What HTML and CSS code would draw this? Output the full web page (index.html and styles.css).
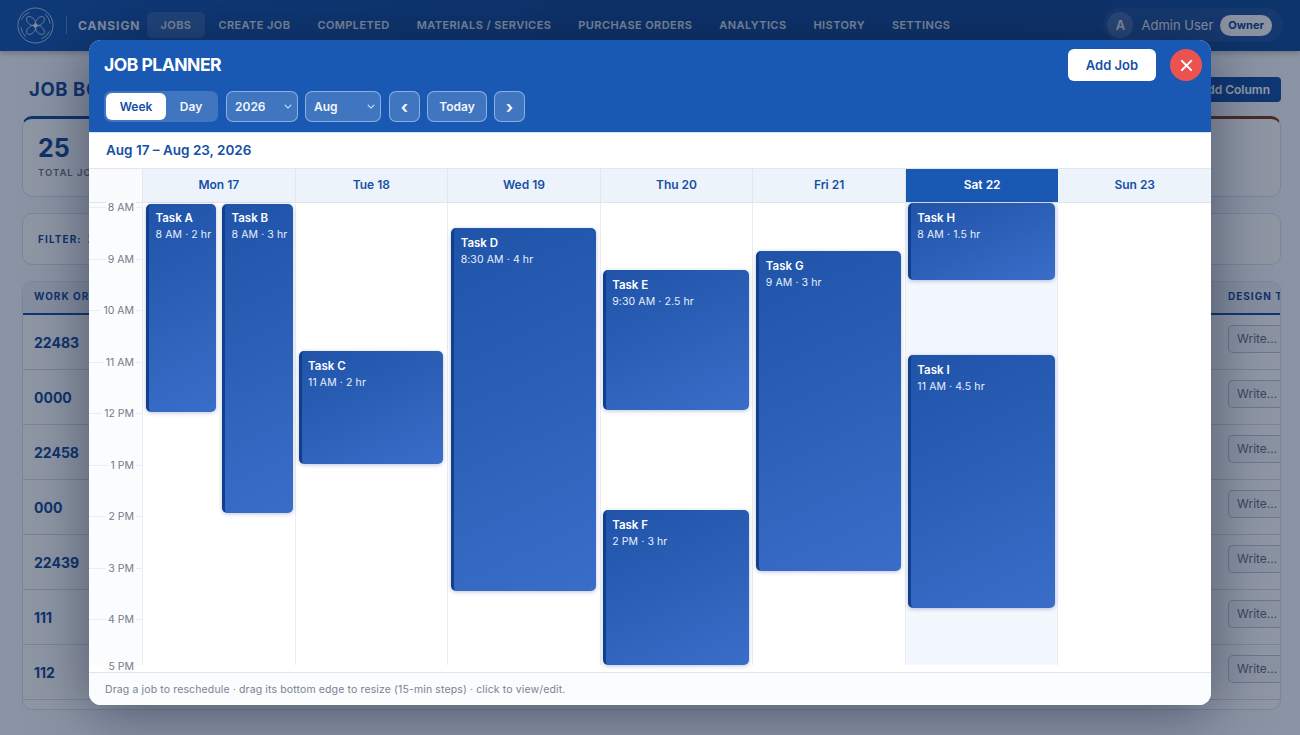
FILE: index.html
```html
<!DOCTYPE html>
<html lang="en">
<head>
<meta charset="utf-8">
<title>Job Planner</title>
<link rel="stylesheet" href="styles.css">
</head>
<body>
<div class="page">
  <nav class="nav">
    <svg class="logo" viewBox="0 0 38 38" fill="none" stroke="#d5dfef" stroke-width=".8">
      <circle cx="19" cy="19" r="18"/>
      <path d="M4.500 13a15.500 15.500 0 0 1 8-7.500M33.500 25a15.500 15.500 0 0 1-8 7.500M4 21a15.500 15.500 0 0 0 5 9.500M34 17a15.500 15.500 0 0 0-5-9.500"/>
      <ellipse cx="19" cy="12.500" rx="3.500" ry="5.500" transform="rotate(45 19 19)"/>
      <ellipse cx="19" cy="12.500" rx="3.500" ry="5.500" transform="rotate(135 19 19)"/>
      <ellipse cx="19" cy="12.500" rx="3.500" ry="5.500" transform="rotate(225 19 19)"/>
      <ellipse cx="19" cy="12.500" rx="3.500" ry="5.500" transform="rotate(315 19 19)"/>
      <circle cx="19" cy="19" r="2" fill="#d5dfef"/>
    </svg>
    <span class="nav-sep"></span>
    <span class="brand">CANSIGN</span>
    <a class="nav-link active">JOBS</a>
    <a class="nav-link">CREATE JOB</a>
    <a class="nav-link">COMPLETED</a>
    <a class="nav-link">MATERIALS / SERVICES</a>
    <a class="nav-link">PURCHASE ORDERS</a>
    <a class="nav-link">ANALYTICS</a>
    <a class="nav-link">HISTORY</a>
    <a class="nav-link">SETTINGS</a>
    <div class="user">
      <span class="avatar">A</span>
      <span class="user-name">Admin User</span>
      <span class="role">Owner</span>
    </div>
  </nav>
  <main class="content">
    <div class="title-row">
      <h1>JOB BOARD</h1>
      <button class="add-col">+ Add Column</button>
    </div>
    <div class="stats-row">
      <section class="card stats">
        <div class="stat-num">25</div>
        <div class="stat-label">TOTAL JOBS</div>
      </section>
      <section class="card stats stats-alert"></section>
    </div>
    <section class="card filter"><b>FILTER:</b><span>Z</span></section>
    <section class="card table">
      <div class="thead"><span>WORK ORDER</span><span>DESIGN TASK</span></div>
      <div class="row"><b>22483</b><span class="write">Write...</span></div>
      <div class="row"><b>0000</b><span class="write">Write...</span></div>
      <div class="row"><b>22458</b><span class="write">Write...</span></div>
      <div class="row"><b>000</b><span class="write">Write...</span></div>
      <div class="row"><b>22439</b><span class="write">Write...</span></div>
      <div class="row"><b>111</b><span class="write">Write...</span></div>
      <div class="row"><b>112</b><span class="write">Write...</span></div>
    </section>
  </main>
</div>
<div class="overlay"></div>
<div class="modal">
  <header class="m-head">
    <div class="m-top">
      <h2>JOB PLANNER</h2>
      <button class="add-job">Add Job</button>
      <button class="close" aria-label="Close">
        <svg viewBox="0 0 14 14" width="13" height="13" stroke="#fff" stroke-width="2.200" stroke-linecap="round"><path d="M2 2l10 10M12 2L2 12"/></svg>
      </button>
    </div>
    <div class="m-tools">
      <div class="seg"><button class="seg-on">Week</button><button class="seg-off">Day</button></div>
      <div class="sel sel-year">2026<svg viewBox="0 0 10 6" width="8" height="5" fill="none" stroke="#dbe7fa" stroke-width="1.300"><path d="M1 1l4 4 4-4"/></svg></div>
      <div class="sel sel-month">Aug<svg viewBox="0 0 10 6" width="8" height="5" fill="none" stroke="#dbe7fa" stroke-width="1.300"><path d="M1 1l4 4 4-4"/></svg></div>
      <button class="tool arrow">‹</button>
      <button class="tool today">Today</button>
      <button class="tool arrow">›</button>
    </div>
  </header>
  <div class="range">Aug 17 – Aug 23, 2026</div>
  <div class="days-head">
    <div class="corner"></div>
    <div class="dh">Mon 17</div>
    <div class="dh">Tue 18</div>
    <div class="dh">Wed 19</div>
    <div class="dh">Thu 20</div>
    <div class="dh">Fri 21</div>
    <div class="dh dh-on">Sat 22</div>
    <div class="dh">Sun 23</div>
  </div>
  <div class="cal">
    <div class="times">
      <div class="t"><span>8 AM</span></div><div class="t"><span>9 AM</span></div><div class="t"><span>10 AM</span></div><div class="t"><span>11 AM</span></div><div class="t"><span>12 PM</span></div><div class="t"><span>1 PM</span></div><div class="t"><span>2 PM</span></div><div class="t"><span>3 PM</span></div><div class="t t-short"><span>4 PM</span></div><div class="t t-end"><span>5 PM</span></div>
    </div>
    <div class="col">
      <article class="ev e-a"><b>Task A</b><span>8 AM · 2 hr</span></article>
      <article class="ev e-b"><b>Task B</b><span>8 AM · 3 hr</span></article>
    </div>
    <div class="col">
      <article class="ev e-c"><b>Task C</b><span>11 AM · 2 hr</span></article>
    </div>
    <div class="col">
      <article class="ev e-d"><b>Task D</b><span>8:30 AM · 4 hr</span></article>
    </div>
    <div class="col">
      <article class="ev e-e"><b>Task E</b><span>9:30 AM · 2.5 hr</span></article>
      <article class="ev e-f"><b>Task F</b><span>2 PM · 3 hr</span></article>
    </div>
    <div class="col">
      <article class="ev e-g"><b>Task G</b><span>9 AM · 3 hr</span></article>
    </div>
    <div class="col col-on">
      <article class="ev e-h"><b>Task H</b><span>8 AM · 1.5 hr</span></article>
      <article class="ev e-i"><b>Task I</b><span>11 AM · 4.5 hr</span></article>
    </div>
    <div class="col col-last"></div>
  </div>
  <footer class="m-foot">Drag a job to reschedule · drag its bottom edge to resize (15-min steps) · click to view/edit.</footer>
</div>
</body>
</html>
```
FILE: styles.css
```css
* { box-sizing: border-box; }
html, body { margin: 0; height: 100%; overflow: hidden; }
body { font-family: Inter, "Liberation Sans", sans-serif; background: #f1f4f9; color: #123a7e; }
button { font-family: inherit; border: 0; cursor: pointer; }

.page { width: 1300px; height: 735px; overflow: hidden; }
.nav { height: 51px; padding: 0 0 1px 17px; display: flex; align-items: center; background: linear-gradient(90deg, #0f52ad, #0e4392 45%, #0e4594); box-shadow: 0 2px 6px rgba(0,0,0,.25); }
.logo { width: 37px; height: 37px; flex: none; }
.nav-sep { width: 1px; height: 18px; margin: 0 11px 0 12px; background: rgba(255,255,255,.3); }
.brand { width: 68px; font-size: 12px; font-weight: 700; letter-spacing: .9px; color: #e6ebf3; }
.nav-link { height: 26px; padding: 0 13.500px; display: flex; align-items: center; font-size: 11px; font-weight: 600; letter-spacing: .42px; color: #dbe2ee; border-radius: 5px; white-space: nowrap; }
.nav-link.active { background: rgba(255,255,255,.13); margin-left: 1px; }
.user { margin-left: auto; margin-right: 17px; height: 34px; padding: 0 11px 0 4px; display: flex; align-items: center; border-radius: 17px; background: rgba(255,255,255,.06); }
.avatar { width: 26px; height: 26px; border-radius: 50%; display: grid; place-items: center; background: rgba(255,255,255,.16); color: #e6ebf3; font-size: 13px; font-weight: 600; }
.user-name { margin: 0 7px 0 8px; font-size: 13px; color: #e6ebf3; }
.role { height: 21px; padding: 0 8px; border-radius: 11px; display: flex; align-items: center; background: #f3f5f9; color: #0e3f8e; font-size: 11px; font-weight: 700; }

.content { padding: 26px 19px 0 22px; }
.title-row { height: 39px; display: flex; justify-content: space-between; align-items: flex-start; }
h1 { margin: 0 0 0 7px; font-size: 18.500px; line-height: 24px; font-weight: 700; letter-spacing: .6px; color: #0f4494; }
.add-col { height: 25px; width: 120px; text-align: right; padding: 0 11px; border-radius: 4px; background: #0f4ba3; color: #fff; font-size: 12px; font-weight: 600; }
.card { background: #f7f9fc; border: 1px solid #d5dbe6; border-radius: 10px; }
.stats-row { display: flex; gap: 16px; }
.stats { flex: 1; height: 81px; border-top: 3px solid #0f4494; padding: 16px 15px; }
.stats-alert { flex: none; width: 300px; border-top-color: #7a3512; }
.stat-num { font-size: 25px; line-height: 26px; font-weight: 700; color: #0f4494; }
.stat-label { margin-top: 6px; font-size: 9.500px; font-weight: 600; letter-spacing: 1px; color: #6a7280; }
.filter { height: 52px; margin-top: 16px; padding-left: 15px; display: flex; align-items: center; gap: 6px; font-size: 10px; letter-spacing: 1.100px; color: #0f4494; }
.table { height: 429px; margin-top: 16px; overflow: hidden; }
.thead { height: 33px; padding: 0 0 3px 11px; display: flex; justify-content: space-between; align-items: center; background: #e7ebf3; border-bottom: 2px solid #0f4ba3; font-size: 10px; font-weight: 700; letter-spacing: 1px; color: #0f4494; }
.thead span:last-child { width: 52px; white-space: nowrap; }
.row { height: 55px; padding-left: 11px; display: flex; justify-content: space-between; align-items: center; border-bottom: 1px solid #d2d8e3; }
.row b { font-size: 14px; color: #0f4494; }
.write { width: 52px; height: 28px; padding-left: 8px; margin-bottom: 7px; display: flex; align-items: center; border: 1px solid #b8c2d4; border-right: 0; border-radius: 5px 0 0 5px; background: #f0f3f8; font-size: 12px; color: #5f6a7c; }

.overlay { position: absolute; inset: 0; background: rgba(15,30,60,.45); }

.modal { position: absolute; left: 89px; top: 40px; width: 1122px; height: 665px; display: flex; flex-direction: column; border-radius: 12px; overflow: hidden; background: #fff; box-shadow: 0 6px 60px rgba(10,20,45,.5); }
.m-head { height: 92px; background: #1a59b3; padding: 9px 9px 0 15px; flex: none; }
.m-top { display: flex; align-items: center; height: 32px; }
h2 { margin: 0 auto 2px 0; font-size: 17.500px; font-weight: 700; color: #fff; letter-spacing: -.5px; }
.add-job { width: 88px; height: 32px; border-radius: 6px; background: #fff; color: #164fa6; font-size: 13px; font-weight: 600; }
.close { width: 32px; height: 32px; margin-left: 14px; border-radius: 50%; background: #ec5350; display: grid; place-items: center; padding: 0; }
.m-tools { margin-top: 10px; display: flex; align-items: center; height: 31px; }
.seg { width: 114px; height: 31px; padding: 2px; display: flex; border-radius: 7px; background: rgba(255,255,255,.17); margin-right: 8px; }
.seg button { height: 27px; font-size: 12px; font-weight: 600; border-radius: 6px; padding: 0; }
.seg-on { width: 60px; background: #fff; color: #164fa6; }
.seg-off { width: 50px; background: none; color: #f3f6fb; }
.sel, .tool { height: 31px; border: 1px solid rgba(190,215,250,.6); border-radius: 7px; background: rgba(255,255,255,.17); color: #f3f6fb; font-size: 12px; font-weight: 600; }
.sel { display: flex; align-items: center; justify-content: space-between; padding: 0 5px 0 8px; margin-right: 7px; }
.sel-year { width: 72px; }
.sel-month { width: 76px; margin-right: 8px; }
.tool { padding: 0; }
.arrow { width: 31px; font-size: 17px; line-height: 26px; font-weight: 700; }
.today { width: 60px; margin: 0 7px 0 7px; }
.range { height: 36px; flex: none; padding: 0 0 2px 17px; display: flex; align-items: center; font-size: 13.500px; font-weight: 600; color: #164fa6; border-top: 1px solid #d7e3f5; }
.days-head { height: 35px; flex: none; display: grid; grid-template-columns: 54px repeat(7, 1fr); border-top: 1px solid #e1e7f1; border-bottom: 1px solid #dfe5ef; }
.corner { background: #fafbfd; border-right: 1px solid #e4e9f2; }
.dh { padding-bottom: 2px; display: grid; place-items: center; background: #edf3fb; border-right: 1px solid #dfe6f1; font-size: 12px; font-weight: 600; color: #164fa6; }
.dh:last-child { border-right: 0; }
.dh-on { background: #1a59b3; color: #fff; border-right: 0; }
.cal { height: 469px; flex: none; padding-bottom: 7px; display: grid; grid-template-columns: 54px repeat(7, 1fr); }
.times { background: #fbfcfe; border-right: 1px solid #e9edf4; }
.t { height: 51.500px; display: flex; align-items: flex-start; justify-content: flex-end; padding: 0 6px 0 0; font-size: 10.500px; line-height: 11px; color: #727b89; background: linear-gradient(#e9edf3, #e9edf3) no-repeat 0 5px / 100% 1px; }
.t:first-child { margin-top: -1px; }
.t span { padding: 0 2px; background: #fbfcfe; }
.t-short { height: 47px; }
.t-end { height: 0; }
.col { position: relative; border-right: 1px solid #e9edf3; }
.col-on { background: #f3f7fe; }
.col-last { border-right: 0; }
.ev { position: absolute; display: flex; flex-direction: column; padding: 8px 8px 0 6.500px; border-radius: 5px; border-left: 3px solid #123f8c; background: linear-gradient(155deg, #1f54a9, #3a6dc8); color: #fff; box-shadow: 0 1px 4px rgba(25,60,130,.3); overflow: hidden; }
.ev b { font-size: 11.500px; line-height: 15px; font-weight: 600; }
.ev span { margin-top: 2px; font-size: 10.500px; line-height: 14px; letter-spacing: .1px; color: #e8effa; white-space: nowrap; }
.e-a { left: 3px; width: 70px; top: 1px; height: 208px; padding-top: 7px; }
.e-b { left: 79px; width: 71px; top: 1px; height: 309px; padding-top: 7px; }
.e-c { left: 3px; width: 144px; top: 148px; height: 113px; }
.e-d { left: 3px; width: 145px; top: 25px; height: 363px; }
.e-e { left: 2px; width: 146px; top: 67px; height: 140px; }
.e-f { left: 2px; width: 146px; top: 307px; height: 155px; }
.e-g { left: 3px; width: 145px; top: 48px; height: 320px; }
.e-h { left: 2px; width: 147px; top: 0; height: 77px; }
.e-i { left: 2px; width: 147px; top: 152px; height: 253px; }
.m-foot { flex: 1; padding: 1px 0 0 16px; display: flex; align-items: center; background: #fbfcfe; border-top: 1px solid #dfe5ee; font-size: 10.500px; letter-spacing: .13px; color: #7a8391; }
```
